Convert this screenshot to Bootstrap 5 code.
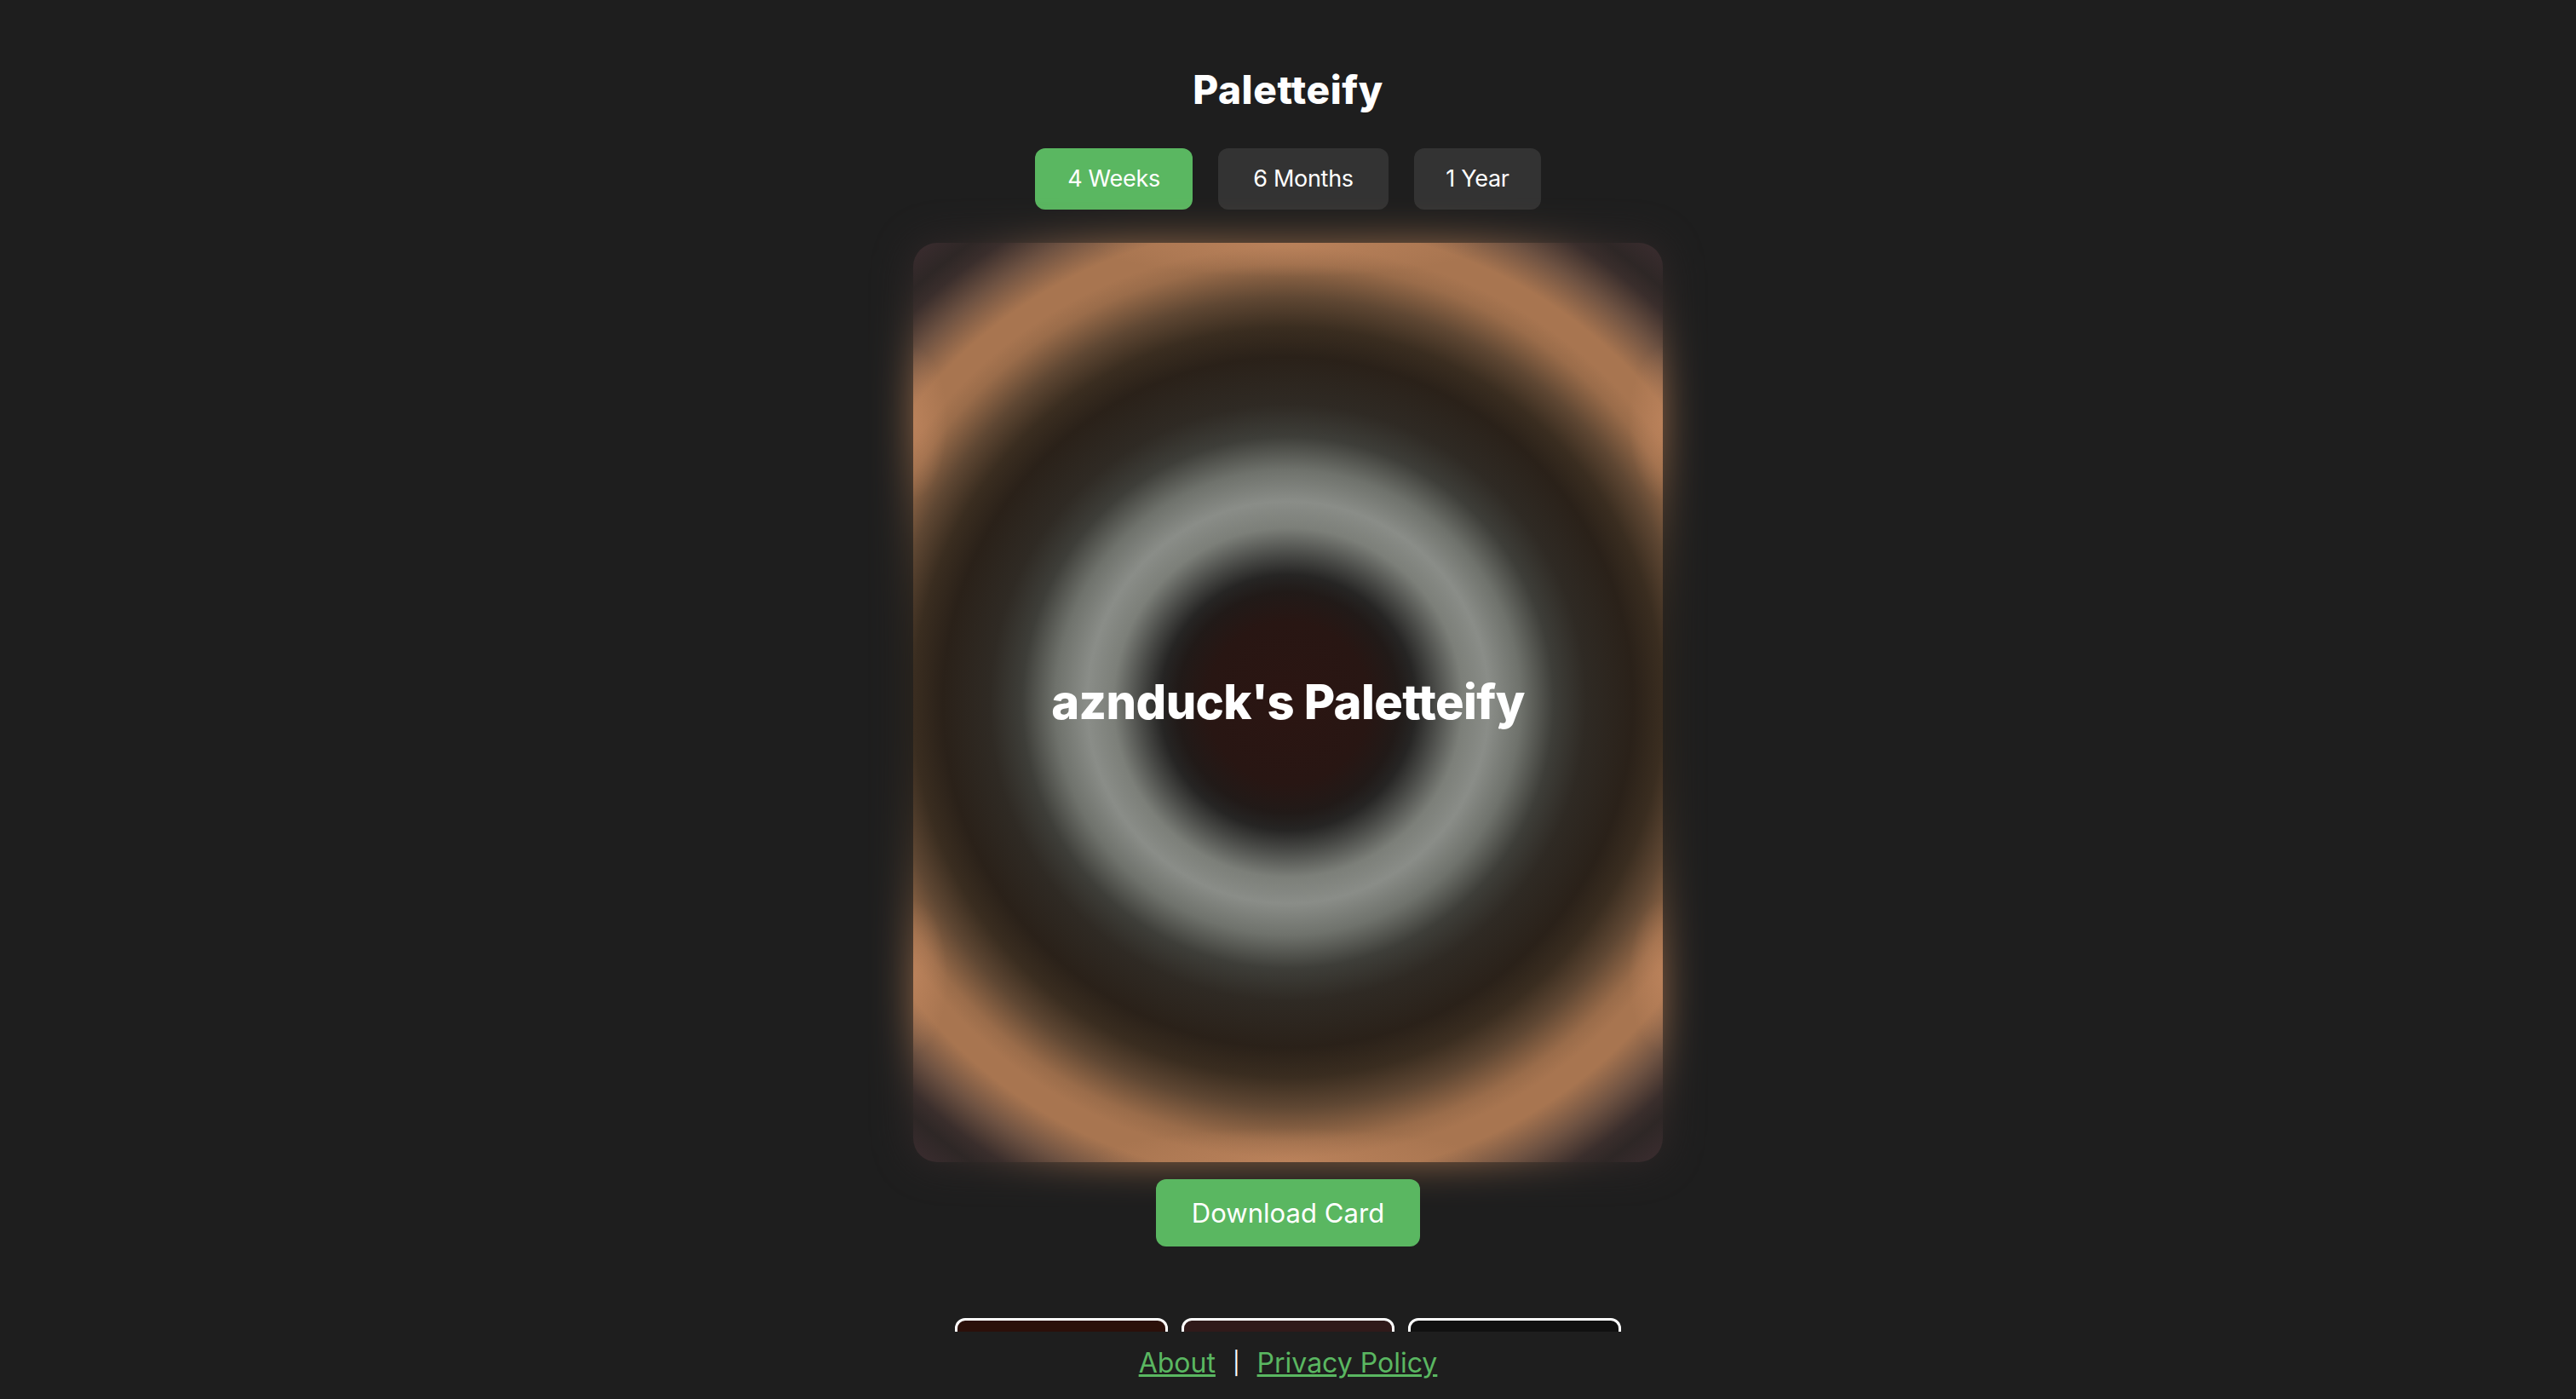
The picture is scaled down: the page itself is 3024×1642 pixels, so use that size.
<!DOCTYPE html>
<html lang="en">
<head>
<meta charset="utf-8">
<title>Paletteify</title>
<link href="https://cdn.jsdelivr.net/npm/bootstrap@5.3.0/dist/css/bootstrap.min.css" rel="stylesheet">
<style>
html, body { height: 100%; }
body { background: #1e1e1e; color: #fff; font-family: Inter, "Noto Sans", sans-serif; overflow: hidden; }
.shell { height: 100vh; }
.stage { height: 1563px; overflow: hidden; padding-top: 79px; flex: none; }
.brand { font-size: 46px; line-height: 53px; font-weight: 800; margin: 0 0 42px; letter-spacing: .6px; }
.range-row { gap: 30px; margin-bottom: 40px; flex: none; }
.range-btn { height: 72px; padding: 0; border: 0; border-radius: 12px; font-size: 27px; line-height: 72px; color: #fff; background: #333; letter-spacing: -.3px; }
.range-btn:hover, .range-btn:active { background: #333; color: #fff; }
.range-on, .range-on:hover, .range-on:active { background: #5ab761; }
.w-a { width: 185px; } .w-b { width: 200px; } .w-c { width: 149px; }
.art-wrap { flex: none; width: 880px; height: 1079px; margin-top: -1px; position: relative; margin-bottom: 20px; --ring: radial-gradient(circle 696px at 50% 50%, #2b1512 0, #281613 95px, #211a18 130px, #262524 150px, #474845 172px, #7c7f79 205px, #8a8d88 236px, #6f726c 273px, #3e3e39 312px, #2f2a24 350px, #2a2119 405px, #3a2d20 440px, #5f4733 475px, #9a6c4a 515px, #a87550 535px, #a87550 560px, #6e5242 600px, #3a2e2c 635px, #2e2726 655px, #3c2d30 696px); }
.art-wrap::before { content: ""; position: absolute; inset: 0; border-radius: 28px; background: var(--ring); filter: blur(24px); opacity: .85; }
.art-face { position: relative; width: 100%; height: 100%; border-radius: 28px; overflow: hidden; background:
  radial-gradient(ellipse 230px 40px at 50% 0, rgba(198,138,98,.6), rgba(198,138,98,0)),
  radial-gradient(ellipse 230px 40px at 50% 100%, rgba(198,138,98,.6), rgba(198,138,98,0)),
  radial-gradient(ellipse 40px 90px at 0 211px, rgba(198,138,98,.6), rgba(198,138,98,0)),
  radial-gradient(ellipse 40px 90px at 100% 211px, rgba(198,138,98,.6), rgba(198,138,98,0)),
  radial-gradient(ellipse 40px 90px at 0 861px, rgba(198,138,98,.6), rgba(198,138,98,0)),
  radial-gradient(ellipse 40px 90px at 100% 861px, rgba(198,138,98,.6), rgba(198,138,98,0)),
  var(--ring); }
.art-title { font-size: 56px; font-weight: 800; line-height: 1.2; letter-spacing: -.6px; }
.save-btn { flex: none; width: 310px; height: 79px; padding: 0; border: 0; border-radius: 12px; background: #5ab761; color: #fff; font-size: 31px; line-height: 79px; letter-spacing: .05px; margin-bottom: 84px; position: relative; }
.save-btn:hover, .save-btn:active { background: #5ab761; color: #fff; }
.thumb-row { gap: 16px; flex: none; }
.thumb { width: 250px; height: 200px; border: 3px solid #fff; border-radius: 12px; }
.t1 { background: #2b100a; } .t2 { background: #301a1a; } .t3 { background: #111; }
.foot { font-size: 32px; line-height: 40px; padding-top: 17px; gap: 20px; }
.foot a { color: #5ab761; text-decoration: underline; }
.foot span { font-size: 26px; }
</style>
</head>
<body>
<div class="shell d-flex flex-column">
  <main class="stage d-flex flex-column align-items-center">
    <h1 class="brand text-center">Paletteify</h1>
    <div class="range-row d-flex justify-content-center">
      <button class="btn range-btn range-on w-a" type="button">4 Weeks</button>
      <button class="btn range-btn w-b" type="button">6 Months</button>
      <button class="btn range-btn w-c" type="button">1 Year</button>
    </div>
    <div class="art-wrap">
      <div class="art-face d-flex align-items-center justify-content-center">
        <div class="art-title">aznduck's Paletteify</div>
      </div>
    </div>
    <button class="btn save-btn" type="button">Download Card</button>
    <div class="thumb-row d-flex justify-content-center">
      <div class="thumb t1"></div>
      <div class="thumb t2"></div>
      <div class="thumb t3"></div>
    </div>
  </main>
  <footer class="foot d-flex justify-content-center">
    <a href="#">About</a><span>|</span><a href="#">Privacy Policy</a>
  </footer>
</div>
<script src="https://cdn.jsdelivr.net/npm/bootstrap@5.3.0/dist/js/bootstrap.bundle.min.js"></script>
</body>
</html>
